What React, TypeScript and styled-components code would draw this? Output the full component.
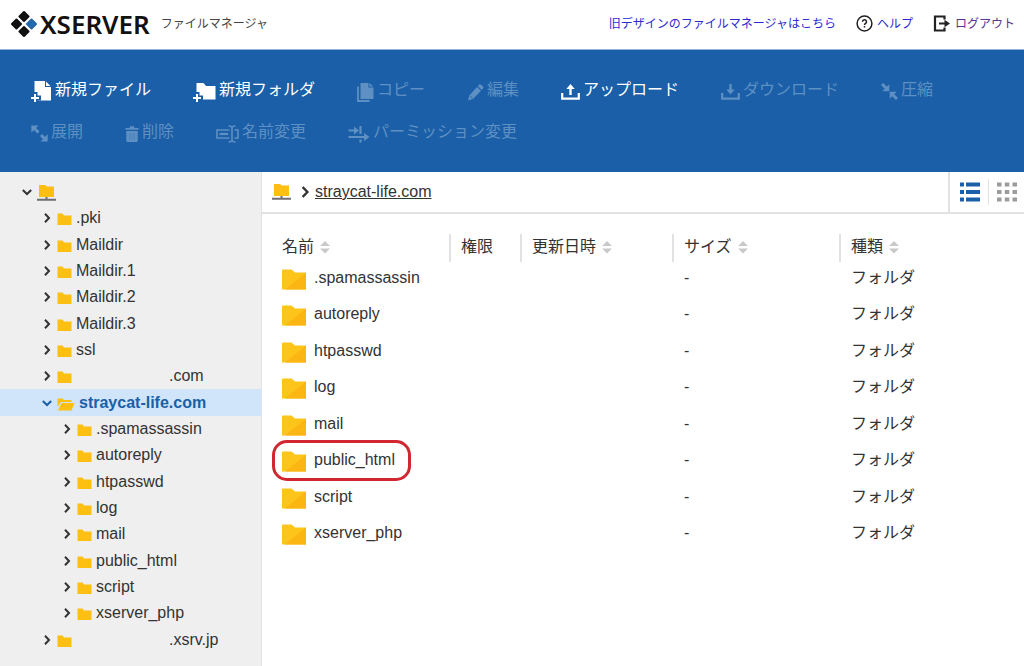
import React from "react";
import styled, { createGlobalStyle } from "styled-components";

const blue = "#1a5fa7";
const line = "#e2e2e2";
const sans = `"Liberation Sans", "Noto Sans CJK JP", sans-serif`;

const GlobalStyle = createGlobalStyle`
  *, *::before, *::after { box-sizing: border-box; }
  body { margin: 0; background: #fff; color: #333; font-family: ${sans}; font-size: 16px; line-height: 24px; }
  button { font: inherit; color: inherit; background: none; border: 0; padding: 0; cursor: pointer; }
  a { color: inherit; }
  ul, ol { list-style: none; margin: 0; padding: 0; }
  svg { display: block; flex: none; }
`;

const Page = styled.div`
  display: flex;
  flex-direction: column;
  min-height: 100vh;
`;

const Header = styled.header`
  display: flex;
  align-items: center;
  height: 50px;
  padding: 0 9px 2px 11px;
  border-bottom: 1px solid #8fb3d8;
`;

const Brand = styled.a`
  display: flex;
  align-items: center;
  gap: 3px;
  color: #111;
  text-decoration: none;
`;

const BrandName = styled.span`
  font: 600 26px/32px "Noto Sans", sans-serif;
`;

const AppTitle = styled.span`
  margin-left: 11px;
  font-size: 12px;
  color: #444;
`;

const HeaderLinks = styled.nav`
  display: flex;
  align-items: center;
  gap: 20px;
  margin-left: auto;
`;

const HeaderLink = styled.a<{ $visited?: boolean }>`
  display: flex;
  align-items: center;
  gap: 4px;
  font-size: 12px;
  white-space: nowrap;
  text-decoration: none;
  color: ${(p) => (p.$visited ? "#5c3490" : "#2a2ad2")};
`;

const Toolbar = styled.div`
  display: flex;
  flex-wrap: wrap;
  gap: 18px 42px;
  padding: 28px 20px 28px 31px;
  background: ${blue};
`;

const Tool = styled.button`
  display: flex;
  align-items: center;
  gap: 3px;
  height: 24px;
  color: #fff;
  white-space: nowrap;
  &:disabled { color: #5f90c4; cursor: default; }
  svg { margin-top: 3px; }
`;

const Body = styled.div`
  display: flex;
  flex: 1;
`;

const Sidebar = styled.nav`
  flex: 0 0 262px;
  padding-top: 7px;
  background: #efefef;
  border-right: 1px solid ${line};
`;

const TreeRow = styled.li<{ $level: number; $selected?: boolean }>`
  display: flex;
  align-items: center;
  height: 26px;
  padding-left: ${(p) => 20 + p.$level * 20}px;
  background: ${(p) => (p.$selected ? "#d0e4fa" : "transparent")};
  color: ${(p) => (p.$selected ? blue : "#333")};
  font-weight: ${(p) => (p.$selected ? 700 : 400)};
  &:nth-child(3n) { height: 27px; }
`;

const Toggle = styled.button`
  display: flex;
  justify-content: center;
  width: 14px;
`;

const TreeLink = styled.a`
  display: flex;
  align-items: center;
  gap: 4px;
  margin-left: 3px;
  text-decoration: none;
  svg { margin-top: 2px; }
`;

const HiddenName = styled.span`
  width: 89px;
`;

const Main = styled.main`
  flex: 1;
  min-width: 0;
`;

const PathBar = styled.div`
  display: flex;
  align-items: stretch;
  height: 42px;
  border-bottom: 2px solid ${line};
`;

const Crumbs = styled.ol`
  display: flex;
  align-items: center;
  flex: 1;
  gap: 8px;
  padding-left: 10px;
  li { display: flex; align-items: center; gap: 4px; }
`;

const Views = styled.div`
  display: flex;
  align-items: center;
  border-left: 2px solid ${line};
  padding: 0 7px 0 10px;
`;

const ViewButton = styled.button<{ $active?: boolean }>`
  color: ${(p) => (p.$active ? blue : "#9b9b9b")};
  & + & { margin-left: 8px; padding: 3px 0 3px 8px; border-left: 1px solid ${line}; }
`;

const Files = styled.table`
  width: calc(100% - 20px);
  margin: 20px 0 0 20px;
  border-collapse: separate;
  border-spacing: 0;
  table-layout: fixed;
  th, td { text-align: left; font-weight: 400; vertical-align: top; }
  th { height: 28px; padding: 0 0 0 10px; border-left: 2px solid ${line}; }
  th:first-child { padding-left: 0; border-left: 0; }
  td { height: 36px; padding: 4px 0 0 12px; }
  td:first-child { padding-left: 0; }
  tbody tr:nth-child(2n) td { height: 37px; }
`;

const Col = styled.col<{ $w?: number }>`
  width: ${(p) => (p.$w ? `${p.$w}px` : "auto")};
`;

const SortButton = styled.button`
  display: flex;
  align-items: center;
  gap: 6px;
  height: 26px;
`;

const HeadLabel = styled.span`
  display: block;
  line-height: 26px;
`;

const FileLink = styled.a<{ $marked?: boolean }>`
  position: relative;
  display: inline-flex;
  align-items: center;
  gap: 8px;
  height: 24px;
  text-decoration: none;
  vertical-align: top;
  svg { margin-top: 3px; }
  &::after {
    content: "";
    display: ${(p) => (p.$marked ? "block" : "none")};
    position: absolute;
    inset: -8px -16px -9px -10px;
    border: 3px solid #d22630;
    border-radius: 15px;
  }
`;

const Logo = () => (
  <svg width="26" height="26" viewBox="0 0 26 26" aria-hidden="true">
    {[[13, 5.5, "#111"], [5.5, 13, "#111"], [20.5, 13, "#2468ad"], [13, 20.5, "#111"]].map(([x, y, c], i) => (
      <rect key={i} x={Number(x) - 4.2} y={Number(y) - 4.2} width="8.4" height="8.4" rx="1" fill={String(c)} transform={`rotate(45 ${x} ${y})`} />
    ))}
  </svg>
);

const HelpIcon = () => (
  <svg width="17" height="17" viewBox="0 0 17 17" fill="none" stroke="#222" strokeWidth="1.5" aria-hidden="true">
    <circle cx="8.5" cy="8.5" r="7.4" />
    <path d="M6.5 6.8a2 2 0 1 1 3 1.7c-.7.4-1 .7-1 1.4M8.5 11v1.6" />
  </svg>
);

const LogoutIcon = () => (
  <svg width="18" height="17" viewBox="0 0 18 17" aria-hidden="true">
    <path d="M11.5 4.5V1.5H2v14h9.5v-3" fill="none" stroke="#222" strokeWidth="2.2" />
    <path d="M6 7.5h5.5V4.8L17 8.5l-5.5 3.7V9.5H6z" fill="#222" />
  </svg>
);

const Plus = ({ y }: { y: number }) => (
  <>
    <path d={`M4 ${y - 6}v12M-2 ${y}h12`} stroke={blue} strokeWidth="5" />
    <path d={`M4 ${y - 4}v8M0 ${y}h8`} stroke="currentColor" strokeWidth="2" />
  </>
);

const NewFileIcon = () => (
  <svg width="21" height="22" viewBox="0 0 21 22" aria-hidden="true">
    <path d="M3.500 0H14v6h6v20H3.500z" fill="none" />
    <path d="M3.500 0H14v6h6v13.500H3.500zM15 0.500 19.500 5H15z" fill="currentColor" />
    <Plus y={17} />
  </svg>
);
const NewFolderIcon = () => (
  <svg width="23" height="22" viewBox="0 0 23 22" aria-hidden="true">
    <path d="M3.500 2h7l2.500 3H22.500v13.500H3.500z" fill="currentColor" />
    <Plus y={17} />
  </svg>
);
const CopyIcon = () => (
  <svg width="17" height="20" viewBox="0 0 17 20" aria-hidden="true">
    <path d="M1 4.5V19h11.5" fill="none" stroke="currentColor" strokeWidth="1.8" />
    <path d="M3.500 1h8v4.5h5V17h-13zM12.500 1l3.800 3.6h-3.800z" fill="currentColor" />
  </svg>
);
const EditIcon = () => (
  <svg width="17" height="18" viewBox="0 0 17 18" aria-hidden="true">
    <path d="M12 1.8a1.5 1.5 0 0 1 2 0l2 1.8a1.5 1.5 0 0 1 0 2l-1.2 1.3-4-3.8zM10 4l4 3.8-8 8.2-5 1.6 1.2-5.2z" fill="currentColor" />
    <path d="m3 12.8 2.6 2.5" stroke={blue} strokeWidth=".8" />
  </svg>
);
const TrayIcon = ({ down }: { down?: boolean }) => (
  <svg width="19" height="17" viewBox="0 0 19 17" aria-hidden="true">
    <path d="M1.2 10v5.6h16.6V10" fill="none" stroke="currentColor" strokeWidth="2.2" />
    <path d={down ? "M8.3 1h2.4v5.5h3L9.5 11.5l-4.2-5h3z" : "M8.3 12h2.4V6h3L9.5 1 5.3 6h3z"} fill="currentColor" />
  </svg>
);
const CompressIcon = () => (
  <svg width="17" height="17" viewBox="0 0 17 17" aria-hidden="true">
    <path d="m1 1 5 5M16 16l-5-5" stroke="currentColor" strokeWidth="3" />
    <path d="M8.3 1.3v7H1.300zM8.700 15.700v-7h7z" fill="currentColor" />
  </svg>
);
const ExpandIcon = () => (
  <svg width="17" height="17" viewBox="0 0 17 17" aria-hidden="true">
    <path d="m2 2 5.500 5.500M15 15l-5-5" stroke="currentColor" strokeWidth="3" />
    <path d="M.3.5h7.200L.3 7.700zM16.700 16.500h-7.200l7.200-7.200z" fill="currentColor" />
  </svg>
);
const TrashIcon = () => (
  <svg width="14" height="18" viewBox="0 0 14 18" aria-hidden="true">
    <path d="M.5 3h4l.6-1.8h3.8L9.500 3h4v1.800H.5zM1.300 6h11.400v9.500a1.500 1.500 0 0 1-1.500 1.500H2.800a1.500 1.500 0 0 1-1.500-1.500z" fill="currentColor" />
    <path d="M4.800 8v7M7 8v7M9.200 8v7" stroke={blue} strokeWidth=".3" />
  </svg>
);
const RenameIcon = () => (
  <svg width="23" height="18" viewBox="0 0 23 18" fill="none" stroke="currentColor" aria-hidden="true">
    <path d="M13.500 5H1v8h12.500M18.500 5H22v8h-3.500" strokeWidth="1.600" />
    <path d="M3.500 9h8.500" strokeWidth="2.200" />
    <path d="M12.500 1c2 0 3.500.5 3.500 2v12c0 1.500-1.500 2-3.500 2M19.500 1c-2 0-3.500.5-3.500 2v12c0 1.500 1.500 2 3.500 2" strokeWidth="1.600" />
  </svg>
);
const PermissionIcon = () => (
  <svg width="22" height="18" viewBox="0 0 22 18" aria-hidden="true">
    <path d="M.5 5.500h7M.5 12h17M12.500 1v8M12.500 14.500v3" fill="none" stroke="currentColor" strokeWidth="2.200" />
    <path d="M6 1.500v8l5-4zM16 8v8l5.500-4z" fill="currentColor" />
  </svg>
);

const Chevron = ({ open, size = 10 }: { open?: boolean; size?: number }) => (
  <svg width={size} height={size} viewBox="0 0 10 10" fill="none" stroke="currentColor" strokeWidth="2" aria-hidden="true">
    <path d={open ? "M.8 3 5 7 9.200 3" : "M3 .8 7 5 3 9.200"} />
  </svg>
);
const ServerFolder = () => (
  <svg width="19" height="18" viewBox="0 0 19 18" aria-hidden="true">
    <path d="M2 1h6l2 1.500h7V13H2z" fill="#fcbf12" />
    <path d="M0 15.800h19M9.500 13v2" stroke="#6f6f6f" strokeWidth="2" />
  </svg>
);
const SmallFolder = () => (
  <svg width="15" height="14" viewBox="0 0 15 14" aria-hidden="true">
    <path d="M.5 1.500h5L7 3.500h7.500V13H.5z" fill="#fcbf12" />
  </svg>
);
const OpenFolder = () => (
  <svg width="18" height="14" viewBox="0 0 18 14" aria-hidden="true">
    <path d="M.5 10V1.500h5L7 3h7.500v2H4z" fill="#fcbf12" />
    <path d="M4.500 6h13l-3 7.500H.8z" fill="#fcbf12" />
  </svg>
);
const BigFolder = () => (
  <svg width="24" height="21" viewBox="0 0 24 21" aria-hidden="true">
    <path d="M0 1.500Q0 .5 1 .5h8.500L13 3.500h11V20.500H0z" fill="#fdc419" />
    <path d="M24 3.500v17H3z" fill="#fcb614" />
  </svg>
);
const SortIcon = () => (
  <svg width="10" height="14" viewBox="0 0 10 14" fill="#c9c9c9" aria-hidden="true">
    <path d="M5 1l5 5H0zM5 13.500l5-5H0z" />
  </svg>
);
const ListIcon = () => (
  <svg width="20" height="20" viewBox="0 0 20 20" fill="currentColor" aria-hidden="true">
    {[0.5, 8, 15.5].map((y) => <path key={y} d={`M0 ${y}h4v4H0zM6 ${y}h14v4H6z`} />)}
  </svg>
);
const GridIcon = () => (
  <svg width="20" height="20" viewBox="0 0 20 20" fill="currentColor" aria-hidden="true">
    {[0.5, 8, 15.5].map((y) => <path key={y} d={`M0 ${y}h4.500v4H0zM7.800 ${y}h4.500v4H7.800zM15.500 ${y}H20v4h-4.500z`} />)}
  </svg>
);

const tools: { label: string; icon: React.ReactNode; enabled?: boolean }[] = [
  { label: "新規ファイル", icon: <NewFileIcon />, enabled: true },
  { label: "新規フォルダ", icon: <NewFolderIcon />, enabled: true },
  { label: "コピー", icon: <CopyIcon /> },
  { label: "編集", icon: <EditIcon /> },
  { label: "アップロード", icon: <TrayIcon />, enabled: true },
  { label: "ダウンロード", icon: <TrayIcon down /> },
  { label: "圧縮", icon: <CompressIcon /> },
  { label: "展開", icon: <ExpandIcon /> },
  { label: "削除", icon: <TrashIcon /> },
  { label: "名前変更", icon: <RenameIcon /> },
  { label: "パーミッション変更", icon: <PermissionIcon /> },
];

const files = [".spamassassin", "autoreply", "htpasswd", "log", "mail", "public_html", "script", "xserver_php"];

type Node = { name: string; level: number; open?: boolean; selected?: boolean; hidden?: boolean };
const tree: Node[] = [
  { name: "", level: 0, open: true },
  ...[".pki", "Maildir", "Maildir.1", "Maildir.2", "Maildir.3", "ssl"].map((name) => ({ name, level: 1 })),
  { name: ".com", level: 1, hidden: true },
  { name: "straycat-life.com", level: 1, open: true, selected: true },
  ...files.map((name) => ({ name, level: 2 })),
  { name: ".xsrv.jp", level: 1, hidden: true },
];

const columns = [
  { label: "名前", width: 167, sortable: true },
  { label: "権限", width: 71 },
  { label: "更新日時", width: 152, sortable: true },
  { label: "サイズ", width: 167, sortable: true },
  { label: "種類", sortable: true },
];

export default function App() {
  return (
    <Page>
      <GlobalStyle />
      <Header>
        <Brand href="#">
          <Logo />
          <BrandName>XSERVER</BrandName>
        </Brand>
        <AppTitle>ファイルマネージャ</AppTitle>
        <HeaderLinks>
          <HeaderLink href="#">旧デザインのファイルマネージャはこちら</HeaderLink>
          <HeaderLink href="#"><HelpIcon />ヘルプ</HeaderLink>
          <HeaderLink href="#" $visited><LogoutIcon />ログアウト</HeaderLink>
        </HeaderLinks>
      </Header>
      <Toolbar role="toolbar">
        {tools.map((t) => (
          <Tool key={t.label} type="button" disabled={!t.enabled}>
            {t.icon}
            {t.label}
          </Tool>
        ))}
      </Toolbar>
      <Body>
        <Sidebar>
          <ul>
            {tree.map((n, i) => (
              <TreeRow key={i} $level={n.level} $selected={n.selected}>
                <Toggle type="button" aria-label="開閉" aria-expanded={!!n.open}>
                  <Chevron open={n.open} />
                </Toggle>
                <TreeLink href="#" aria-label={n.name || "ルート"}>
                  {n.level === 0 ? <ServerFolder /> : n.open ? <OpenFolder /> : <SmallFolder />}
                  {n.hidden && <HiddenName />}
                  {n.name}
                </TreeLink>
              </TreeRow>
            ))}
          </ul>
        </Sidebar>
        <Main>
          <PathBar>
            <Crumbs>
              <li><a href="#" aria-label="ルート"><ServerFolder /></a></li>
              <li><Chevron size={12} /><a href="#">straycat-life.com</a></li>
            </Crumbs>
            <Views>
              <ViewButton type="button" aria-label="リスト表示" $active><ListIcon /></ViewButton>
              <ViewButton type="button" aria-label="アイコン表示"><GridIcon /></ViewButton>
            </Views>
          </PathBar>
          <Files>
            <colgroup>
              {columns.map((c) => <Col key={c.label} $w={c.width} />)}
            </colgroup>
            <thead>
              <tr>
                {columns.map((c) => (
                  <th key={c.label} scope="col">
                    {c.sortable ? <SortButton type="button">{c.label}<SortIcon /></SortButton> : <HeadLabel>{c.label}</HeadLabel>}
                  </th>
                ))}
              </tr>
            </thead>
            <tbody>
              {files.map((name) => (
                <tr key={name}>
                  <td><FileLink href="#" $marked={name === "public_html"}><BigFolder />{name}</FileLink></td>
                  <td />
                  <td />
                  <td>-</td>
                  <td>フォルダ</td>
                </tr>
              ))}
            </tbody>
          </Files>
        </Main>
      </Body>
    </Page>
  );
}
